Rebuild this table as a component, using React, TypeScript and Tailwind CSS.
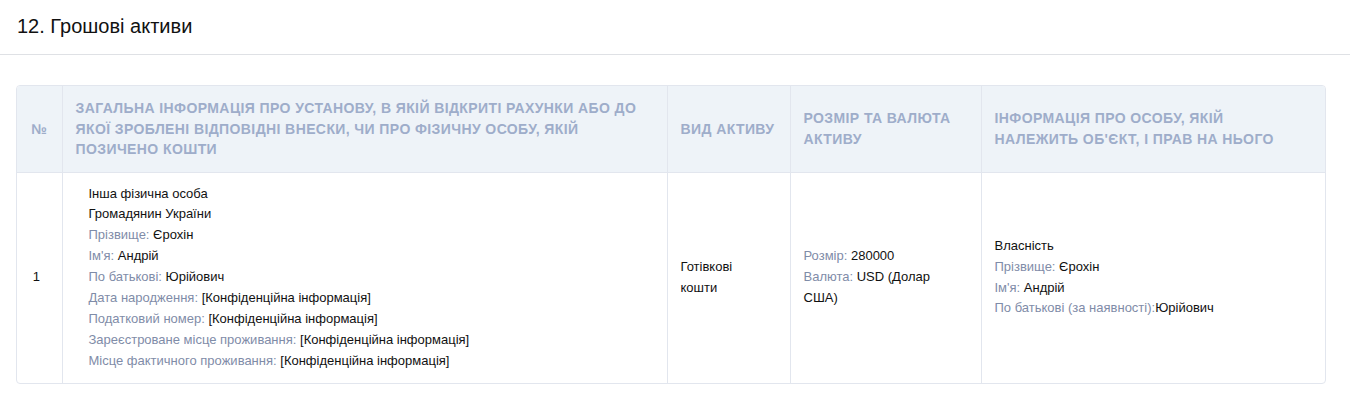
import React from 'react';

const Label = ({ label, value, tight }: { label: string; value: string; tight?: boolean }) => (
    <div>
        <span className="text-[#7f8ca8]">{label}{tight ? '' : ' '}</span>
        <span className="text-[#111]">{value}</span>
    </div>
);

export default function App() {
    const th = "px-[13px] py-[11px] text-left align-middle border-l border-[#e2e6ee] font-bold uppercase text-[#9eadca] text-[14px] leading-[20.5px] tracking-[0.4px]";
    const td = "px-[13px] py-[11px] align-middle border-l border-[#e2e6ee]";

    return (
        <div className="bg-white min-h-screen" style={{ fontFamily: '"Liberation Sans", Arial, sans-serif' }}>
            <div className="h-[55px] border-b border-[#dfe1e5] pl-[17px] flex items-center">
                <h2 className="text-[20px] text-[#111] leading-none pb-[2px]">12. Грошові активи</h2>
            </div>

            <div className="ml-4 mr-6 mt-[30px] border border-[#e2e6ee] rounded-[4px] overflow-hidden">
                <table className="w-full border-collapse table-fixed text-[13px] text-[#111]">
                    <colgroup>
                        <col className="w-[45px]" />
                        <col className="w-[605px]" />
                        <col className="w-[123px]" />
                        <col className="w-[191px]" />
                        <col />
                    </colgroup>
                    <thead className="bg-[#eef3f8]">
                        <tr className="h-[86px]">
                            <th className={th + " !border-l-0 !text-center !px-0"}>№</th>
                            <th className={th}>Загальна інформація про установу, в якій відкриті рахунки або до якої зроблені відповідні внески, чи про фізичну особу, якій позичено кошти</th>
                            <th className={th}>Вид активу</th>
                            <th className={th}>Розмір та валюта активу</th>
                            <th className={th}>
                                <div className="max-w-[295px]">Інформація про особу, якій належить об'єкт, і прав на нього</div>
                            </th>
                        </tr>
                    </thead>
                    <tbody className="leading-[20.9px]">
                        <tr className="border-t border-[#e2e6ee]">
                            <td className="py-[11px] text-center align-middle pr-[6px]">1</td>
                            <td className={td}>
                                <div className="pl-[13px]">
                                    <div>Інша фізична особа</div>
                                    <div>Громадянин України</div>
                                    <Label label="Прізвище:" value="Єрохін" />
                                    <Label label="Ім'я:" value="Андрій" />
                                    <Label label="По батькові:" value="Юрійович" />
                                    <Label label="Дата народження:" value="[Конфіденційна інформація]" />
                                    <Label label="Податковий номер:" value="[Конфіденційна інформація]" />
                                    <Label label="Зареєстроване місце проживання:" value="[Конфіденційна інформація]" />
                                    <Label label="Місце фактичного проживання:" value="[Конфіденційна інформація]" />
                                </div>
                            </td>
                            <td className={td}>
                                <div className="pr-[10px]">Готівкові кошти</div>
                            </td>
                            <td className={td}>
                                <div className="pr-[30px]">
                                    <Label label="Розмір:" value="280000" />
                                    <Label label="Валюта:" value="USD (Долар США)" />
                                </div>
                            </td>
                            <td className={td}>
                                <div>Власність</div>
                                <Label label="Прізвище:" value="Єрохін" />
                                <Label label="Ім'я:" value="Андрій" />
                                <Label label="По батькові (за наявності):" value="Юрійович" tight />
                            </td>
                        </tr>
                    </tbody>
                </table>
            </div>
        </div>
    );
}
